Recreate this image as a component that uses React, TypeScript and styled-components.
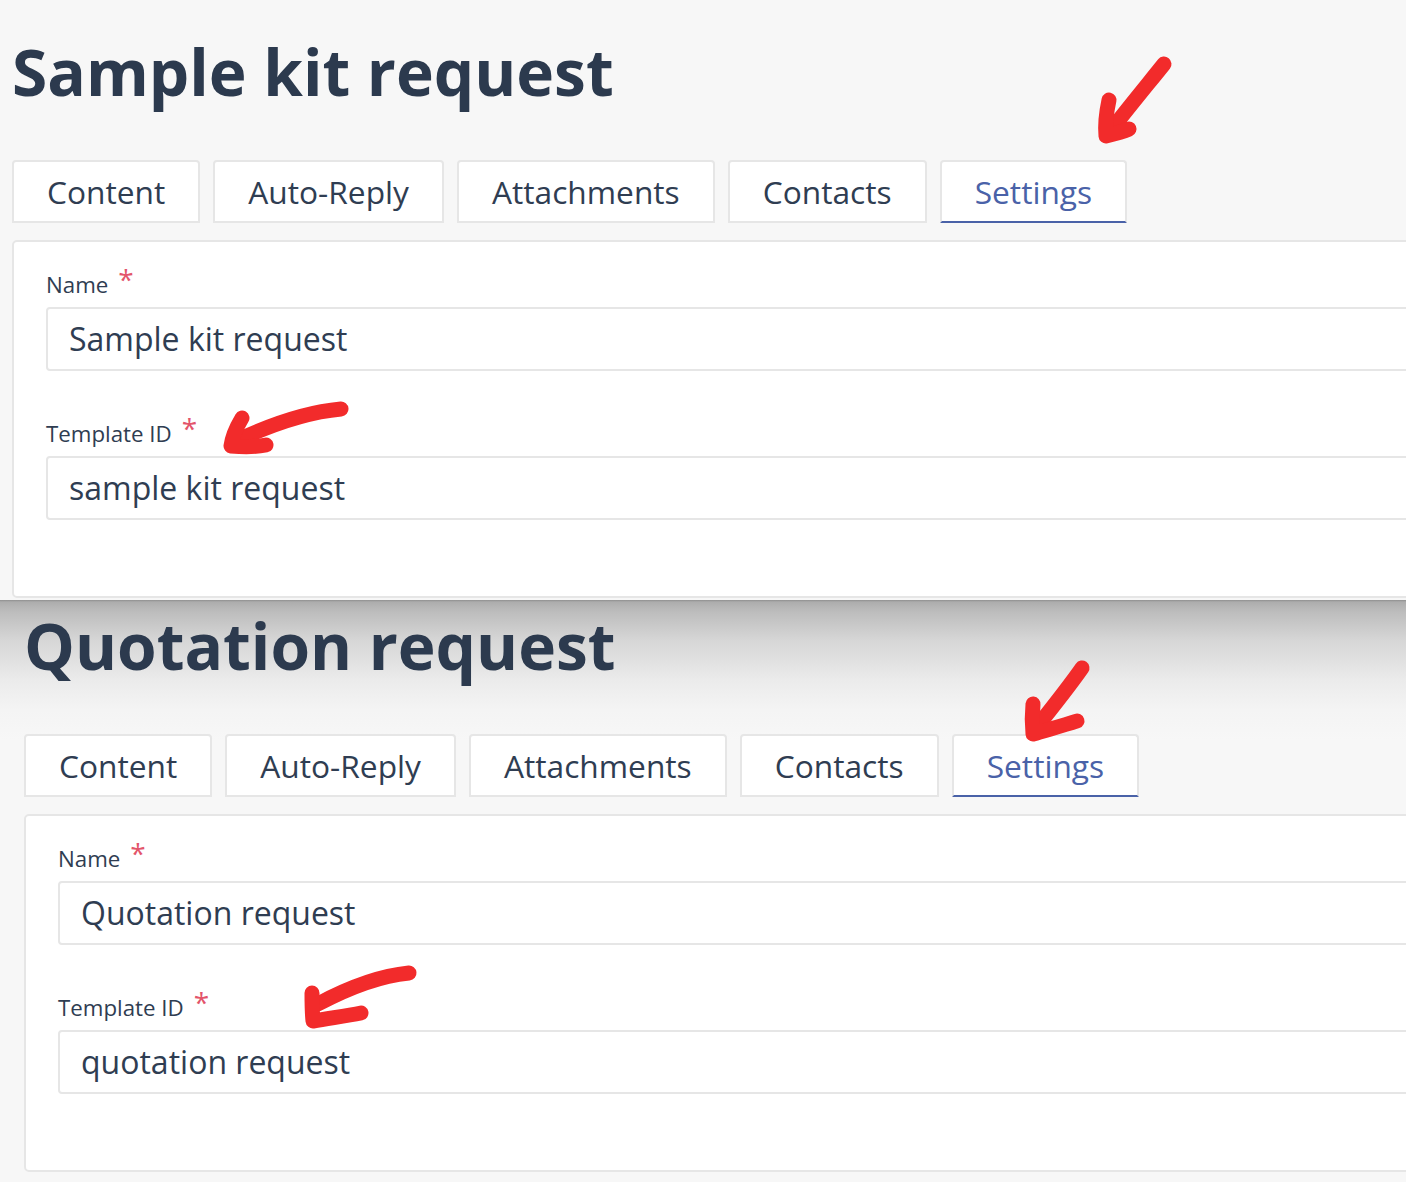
import React from "react";
import styled, { createGlobalStyle } from "styled-components";

const Global = createGlobalStyle`
  html, body { margin: 0; padding: 0; background: #f7f7f7; }
  body { font-family: "Open Sans", "Noto Sans", sans-serif; overflow: hidden; }
  * { box-sizing: border-box; }
`;

const Page = styled.div`
  width: 1406px;
  height: 1182px;
  overflow: hidden;
  display: flex;
  flex-direction: column;
`;

const Screen = styled.section<{ $shift: number; $top: number; $height: number; $shadow?: boolean }>`
  position: relative;
  height: ${(p) => p.$height}px;
  padding: ${(p) => p.$top}px 0 0 ${(p) => p.$shift}px;
  overflow: hidden;
  background: ${(p) =>
    p.$shadow
      ? "linear-gradient(180deg, #8f8f8f 0px, #adadad 2px, #bdbdbd 12px, #d6d6d6 40px, #ebebeb 80px, #f4f4f4 110px, #f7f7f7 140px)"
      : "#f7f7f7"};
`;

const Title = styled.h1`
  margin: 0;
  font-size: 64px;
  line-height: 80px;
  font-weight: 700;
  color: #2c3a4e;
  letter-spacing: 0;
`;

const TabRow = styled.div`
  display: flex;
  gap: 13px;
  margin-top: 48px;
`;

const Tab = styled.div<{ $active?: boolean }>`
  height: 63px;
  padding: 0 33px;
  border: 2px solid #e6e6e6;
  border-bottom-color: ${(p) => (p.$active ? "#4a62a8" : "#e6e6e6")};
  border-radius: 4px 4px 0 0;
  background: #ffffff;
  font-size: 31.7px;
  line-height: 59px;
  color: ${(p) => (p.$active ? "#4a62a8" : "#2f3d52")};
`;

const Panel = styled.div`
  margin-top: 17px;
  width: 1500px;
  height: 358px;
  background: #ffffff;
  border: 2px solid #e6e6e6;
  border-radius: 5px;
  padding: 28px 32px 0 32px;
  display: flex;
  flex-direction: column;
  gap: 48px;
`;

const Field = styled.div`
  display: flex;
  flex-direction: column;
  gap: 7px;
`;

const Label = styled.div`
  font-size: 22.3px;
  line-height: 30px;
  color: #2f3d52;
  display: flex;
  align-items: flex-start;
  gap: 10px;
`;

const Star = styled.span`
  color: #e3546a;
  font-size: 28px;
  line-height: 28px;
  margin-top: -5px;
`;

const Input = styled.div`
  height: 64px;
  border: 2px solid #e6e6e6;
  border-radius: 4px;
  padding: 0 21px;
  font-size: 32px;
  line-height: 60px;
  color: #2f3d52;
  background: #fff;
`;

const Overlay = styled.svg`
  position: absolute;
  left: 0;
  top: 0;
  pointer-events: none;
`;

const tabs = ["Content", "Auto-Reply", "Attachments", "Contacts", "Settings"];

type Arrow = { shaft: string; head: string };

function Form({ title, name, id }: { title: string; name: string; id: string }) {
  return (
    <>
      <Title>{title}</Title>
      <TabRow>
        {tabs.map((t) => (
          <Tab key={t} $active={t === "Settings"}>
            {t}
          </Tab>
        ))}
      </TabRow>
      <Panel>
        <Field>
          <Label>
            Name <Star>*</Star>
          </Label>
          <Input>{name}</Input>
        </Field>
        <Field>
          <Label>
            Template ID <Star>*</Star>
          </Label>
          <Input>{id}</Input>
        </Field>
      </Panel>
    </>
  );
}

function Arrows({ arrows, height }: { arrows: Arrow[]; height: number }) {
  return (
    <Overlay width={1406} height={height} viewBox={`0 0 1406 ${height}`}>
      {arrows.map((a, i) => (
        <g key={i} fill="none" stroke="#f22b2b" strokeWidth={15} strokeLinecap="round" strokeLinejoin="round">
          <path d={a.shaft} />
          <path d={a.head} />
        </g>
      ))}
    </Overlay>
  );
}

export default function App() {
  return (
    <Page>
      <Global />
      <Screen $shift={12} $top={32} $height={600}>
        <Form title="Sample kit request" name="Sample kit request" id="sample kit request" />
        <Arrows
          height={600}
          arrows={[
            { shaft: "M1164,64 C1148,84 1128,108 1108,134", head: "M1109,100 C1106,114 1105,126 1106,136 C1114,134 1122,132 1129,129" },
            { shaft: "M341,409 C308,412 272,424 236,441", head: "M242,418 C236,428 232,438 231,446 C244,447 256,447 266,445" },
          ]}
        />
      </Screen>
      <Screen $shift={24} $top={6} $height={582} $shadow>
        <Form title="Quotation request" name="Quotation request" id="quotation request" />
        <Arrows
          height={582}
          arrows={[
            { shaft: "M1082,68 C1068,88 1052,108 1036,128", head: "M1033,104 C1032,114 1032,124 1033,134 C1046,130 1062,126 1077,121" },
            { shaft: "M409,373 C378,376 348,388 318,404", head: "M312,393 C312,402 312,412 313,421 C330,418 346,416 361,413" },
          ]}
        />
      </Screen>
    </Page>
  );
}
